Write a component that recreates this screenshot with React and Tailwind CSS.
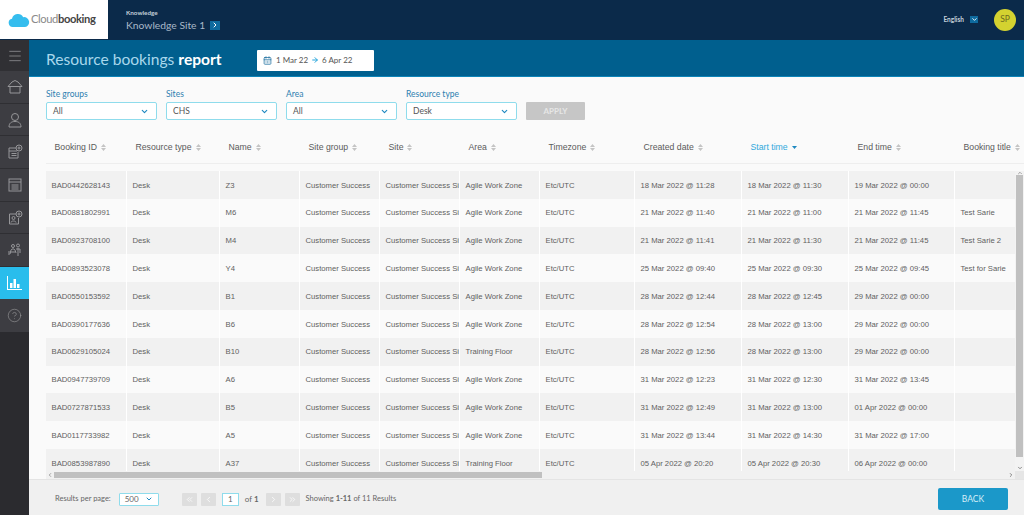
import React from 'react';
import { ChevronDown, ChevronRight, ChevronLeft, ChevronsLeft, ChevronsRight, CalendarDays, ArrowRight, Menu, CircleHelp, ChevronUp } from 'lucide-react';

const widths = ['w-[81px]', 'w-[93px]', 'w-[80px]', 'w-[80px]', 'w-[80px]', 'w-[80px]', 'w-[95px]', 'w-[107px]', 'w-[107px]', 'w-[106px]', 'w-[90px]'];

const headers = ['Booking ID', 'Resource type', 'Name', 'Site group', 'Site', 'Area', 'Timezone', 'Created date', 'Start time', 'End time', 'Booking title'];

const rows = [
  ['BAD0442628143', 'Z3', 'Agile Work Zone', '18 Mar 2022 @ 11:28', '18 Mar 2022 @ 11:30', '19 Mar 2022 @ 00:00', ''],
  ['BAD0881802991', 'M6', 'Agile Work Zone', '21 Mar 2022 @ 11:40', '21 Mar 2022 @ 11:00', '21 Mar 2022 @ 11:45', 'Test Sarie'],
  ['BAD0923708100', 'M4', 'Agile Work Zone', '21 Mar 2022 @ 11:41', '21 Mar 2022 @ 11:30', '21 Mar 2022 @ 11:45', 'Test Sarie 2'],
  ['BAD0893523078', 'Y4', 'Agile Work Zone', '25 Mar 2022 @ 09:40', '25 Mar 2022 @ 09:30', '25 Mar 2022 @ 09:45', 'Test for Sarie'],
  ['BAD0550153592', 'B1', 'Agile Work Zone', '28 Mar 2022 @ 12:44', '28 Mar 2022 @ 12:45', '29 Mar 2022 @ 00:00', ''],
  ['BAD0390177636', 'B6', 'Agile Work Zone', '28 Mar 2022 @ 12:54', '28 Mar 2022 @ 13:00', '29 Mar 2022 @ 00:00', ''],
  ['BAD0629105024', 'B10', 'Training Floor', '28 Mar 2022 @ 12:56', '28 Mar 2022 @ 13:00', '29 Mar 2022 @ 00:00', ''],
  ['BAD0947739709', 'A6', 'Agile Work Zone', '31 Mar 2022 @ 12:23', '31 Mar 2022 @ 12:30', '31 Mar 2022 @ 13:45', ''],
  ['BAD0727871533', 'B5', 'Agile Work Zone', '31 Mar 2022 @ 12:49', '31 Mar 2022 @ 13:00', '01 Apr 2022 @ 00:00', ''],
  ['BAD0117733982', 'A5', 'Agile Work Zone', '31 Mar 2022 @ 13:44', '31 Mar 2022 @ 14:30', '31 Mar 2022 @ 17:00', ''],
  ['BAD0853987890', 'A37', 'Training Floor', '05 Apr 2022 @ 20:20', '05 Apr 2022 @ 20:30', '06 Apr 2022 @ 00:00', ''],
];

const NavIcon = ({ children }) => (
  <svg width="16" height="16" viewBox="0 0 16 16" fill="none" stroke="currentColor" strokeWidth="1">{children}</svg>
);

const navItems = [
  <NavIcon key="home"><path d="M1 7.500 5 3l3-1.500L11 3l4 4.500M3 7.500V14h10V7.500M1 7.500h14" /></NavIcon>,
  <NavIcon key="user"><circle cx="8" cy="5" r="3.500" /><path d="M2 15c0-4 2.500-5.500 6-5.500s6 1.500 6 5.500z" /></NavIcon>,
  <NavIcon key="cal-add"><path d="M9 4H2v10h9V8M2 7h8M4.500 9.500h5M4.500 11.500h5" /><circle cx="12" cy="4" r="3" /><path d="M12 2.500v3M10.500 4h3" /></NavIcon>,
  <NavIcon key="cal"><rect x="2" y="2" width="12" height="12" /><path d="M2 5h12M4.500 8h7M4.500 10h7M4.500 12h7" /></NavIcon>,
  <NavIcon key="person-add"><path d="M9 4H2.500v10h9V8" /><circle cx="6.500" cy="8" r="1.500" /><path d="M4 12.500c0-2 5-2 5 0" /><circle cx="12" cy="4" r="3" /><path d="M12 2.500v3M10.500 4h3" /></NavIcon>,
  <NavIcon key="people"><circle cx="6" cy="4" r="1.500" /><circle cx="11" cy="3.500" r="1.500" /><path d="M1 12h2l1-4c1-1.500 3-1.500 4 0l1 3M11 6v8M9 7h4v4M1 10h7" /></NavIcon>,
];

const Select = ({ value }) => (
  <div className="w-[111px] h-[18px] bg-white border border-[#8fdcec] rounded-[2px] flex items-center justify-between pl-[6px] pr-[7px] text-[8.500px] text-[#555]">
    <span>{value}</span>
    <ChevronDown size={9} strokeWidth={3} className="text-[#1e88c0]" />
  </div>
);

const Filter = ({ label, value }) => (
  <div className="flex flex-col gap-[2px]">
    <span className="text-[8.500px] leading-[11px] text-[#2e7fb0]">{label}</span>
    <Select value={value} />
  </div>
);

const SortIcon = () => (
  <svg width="5" height="7" viewBox="0 0 5 7" fill="#c4c4c4"><path d="M2.500 0 5 3H0zM2.500 7 0 4h5z" /></svg>
);

const PageBtn = ({ children }) => (
  <div className="w-[15px] h-[13px] bg-[#dedede] rounded-[1px] flex items-center justify-center text-white">{children}</div>
);

export default function App() {
  return (
    <div className="w-[1024px] h-[515px] overflow-hidden flex flex-col bg-[#fafafa] font-['Lato',sans-serif]">
      {/* top bar */}
      <header className="h-[40px] shrink-0 bg-[#0b2a4a] flex items-start">
        <div className="w-[108px] h-[39px] bg-white flex items-center pl-[8px]">
          <svg width="22" height="14" viewBox="0 0 23 15" fill="#35bdee"><path d="M5 15a4.500 4.500 0 0 1-1-8.900A6.500 6.500 0 0 1 16 4.500 5.300 5.300 0 0 1 18 15z" /></svg>
          <span className="text-[11.200px] tracking-[-0.4px] text-[#8a8a8a] ml-[1px]">Cloud<span className="text-[#444] font-bold">booking</span></span>
        </div>
        <div className="pl-[18px] pt-[9px] flex flex-col">
          <span className="text-[6.300px] leading-[8px] font-bold text-[#c5d0da]">Knowledge</span>
          <div className="flex items-center gap-[5px]">
            <span className="text-[10.300px] leading-[16px] text-[#a9b8c8]">Knowledge Site 1</span>
            <span className="w-[10px] h-[9px] bg-[#0e6a9e] flex items-center justify-center text-white">
              <ChevronRight size={8} strokeWidth={3} />
            </span>
          </div>
        </div>
        <div className="ml-auto flex items-center h-[39px] pr-[8px]">
          <span className="text-[6.500px] font-bold text-[#c5d0da]">English</span>
          <span className="w-[8px] h-[7px] bg-[#0e6a9e] flex items-center justify-center text-white ml-[6px] mr-[16px]">
            <ChevronDown size={7} strokeWidth={3} />
          </span>
          <span className="w-[22px] h-[22px] rounded-full bg-[#d4d230] flex items-center justify-center text-[8.500px] text-[#6b6a20]">SP</span>
        </div>
      </header>

      <div className="flex flex-1 min-h-0">
        {/* sidebar */}
        <nav className="w-[29px] shrink-0 bg-[#2b2b2f] flex flex-col text-[#969699]">
          <div className="h-[31px] flex items-center justify-center bg-[#303034]"><Menu size={16} strokeWidth={1} className="text-[#a5a5a8]" /></div>
          {navItems.map((icon) => (
            <div key={icon.key} className="h-[32.700px] flex items-center justify-center bg-[#3d3d42] border-b border-[#2f2f33]">{icon}</div>
          ))}
          <div className="h-[32px] flex items-center justify-center bg-[#29bdec] text-white">
            <svg width="15" height="14" viewBox="0 0 15 14" fill="currentColor"><path d="M0 0h1v13h14v1H0zM3 7h2.500v5H3zM6.500 3H9v9H6.500zM10 8h2.500v4H10z" /></svg>
          </div>
          <div className="h-[33px] flex items-center justify-center bg-[#3d3d42]"><CircleHelp size={15} strokeWidth={1} /></div>
        </nav>

        <main className="flex-1 min-w-0 flex flex-col">
          {/* title band */}
          <div className="h-[37px] shrink-0 bg-[#005f8e] border-b border-[#0c84b8] flex items-center pl-[17px] pt-[2px]">
            <h1 className="w-[211px] text-[15.600px] leading-[20px] text-[#a8d8ec] whitespace-nowrap">Resource bookings <span className="font-bold text-white">report</span></h1>
            <div className="w-[117px] h-[21px] mt-[2px] bg-white rounded-[1px] flex items-center pl-[6px] text-[8px] text-[#555]">
              <CalendarDays size={9} className="text-[#1d6f9f] mr-[4px]" />
              1 Mar 22
              <ArrowRight size={8} strokeWidth={3} className="text-[#29a6dc] mx-[3px]" />
              6 Apr 22
            </div>
          </div>

          {/* filters */}
          <div className="flex items-end gap-[9px] pl-[17px] pt-[12px] shrink-0">
            <Filter label="Site groups" value="All" />
            <Filter label="Sites" value="CHS" />
            <Filter label="Area" value="All" />
            <Filter label="Resource type" value="Desk" />
            <div className="w-[59px] h-[18px] bg-[#c6c6c6] rounded-[1px] flex items-center justify-center text-[8px] font-bold text-[#e6e6e6]">APPLY</div>
          </div>

          {/* table */}
          <div className="flex-1 min-h-0 flex flex-col pl-[17px] pt-[13px] font-['Liberation_Sans',sans-serif] overflow-hidden">
            <div className="h-[31px] shrink-0 flex items-center border-b border-[#eeeeee] whitespace-nowrap">
              {headers.map((h, i) => (
                <div key={h} className={`${widths[i]} shrink-0 pl-[8.500px] flex items-center gap-[4px] text-[8.700px] ${h === 'Start time' ? 'text-[#2fa9dc]' : 'text-[#5a5a5a]'}`}>
                  {h}
                  {h === 'Start time' ? (
                    <svg width="5" height="3" viewBox="0 0 5 3" fill="#1e88c0"><path d="M0 0h5L2.500 3z" /></svg>
                  ) : (
                    <SortIcon />
                  )}
                </div>
              ))}
            </div>
            <div className="flex-1 min-h-0 flex mt-[7px]">
              <div className="flex-1 min-w-0 overflow-hidden">
                {rows.map((r, i) => {
                  const cells = [r[0], 'Desk', r[1], 'Customer Success', 'Customer Success Site', r[2], 'Etc/UTC', r[3], r[4], r[5], r[6]];
                  return (
                    <div key={r[0]} className="h-[27.800px] flex">
                      {cells.map((c, j) => (
                        <div key={j} className={`${widths[j]} shrink-0 border-r border-white pl-[5.500px] pt-[1px] flex items-center text-[7.700px] text-[#5f5f5f] whitespace-nowrap overflow-hidden ${i % 2 === 0 ? 'bg-[#f1f1f1]' : 'bg-[#fafafa]'}`}>
                          {c}
                        </div>
                      ))}
                    </div>
                  );
                })}
              </div>
              <div className="w-[9px] shrink-0 bg-[#f3f3f3] flex flex-col items-center">
                <div className="h-[4px] flex items-center"><ChevronUp size={6} strokeWidth={3} className="text-[#888]" /></div>
                <div className="w-[7px] h-[282px] bg-[#c0c0c0]" />
                <div className="mt-auto h-[6px] flex items-center"><ChevronDown size={6} strokeWidth={3} className="text-[#666]" /></div>
              </div>
            </div>
            <div className="h-[8px] shrink-0 flex items-center bg-[#f1f1f1]">
              <ChevronLeft size={6} strokeWidth={3} className="text-[#888] ml-[1px] mr-[1px]" />
              <div className="w-[488px] h-[6px] bg-[#c0c0c0]" />
              <ChevronRight size={6} strokeWidth={3} className="text-[#666] ml-auto mr-[1px]" />
              <div className="w-[9px] h-full bg-[#e6e6e6]" />
            </div>
          </div>

          {/* footer */}
          <footer className="h-[36px] shrink-0 bg-[#f0f0f0] border-t border-[#e4e4e4] flex items-center pl-[26px] pr-[16px] pt-[3px] text-[7.500px] text-[#666]">
            <span className="mr-[8px]">Results per page:</span>
            <div className="w-[40px] h-[13px] bg-white border border-[#8fdcec] rounded-[1px] flex items-center justify-between px-[5px] text-[8px] mr-[23px]">
              500 <ChevronDown size={8} strokeWidth={3} className="text-[#1e88c0]" />
            </div>
            <div className="flex items-center gap-[4px] mr-[6px]">
              <PageBtn><ChevronsLeft size={9} /></PageBtn>
              <PageBtn><ChevronLeft size={9} /></PageBtn>
              <div className="w-[17px] h-[13px] bg-white border border-[#8fdcec] flex items-center justify-center text-[8px] ml-[2px]">1</div>
            </div>
            <span className="text-[8px] mr-[7px]">of <b>1</b></span>
            <div className="flex items-center gap-[4px] mr-[6px]">
              <PageBtn><ChevronRight size={9} /></PageBtn>
              <PageBtn><ChevronsRight size={9} /></PageBtn>
            </div>
            <span>Showing <b>1-11</b> of 11 Results</span>
            <div className="ml-auto w-[70px] h-[22px] bg-[#1b98c9] rounded-[2px] flex items-center justify-center text-[8.500px] text-[#d5eef8]">BACK</div>
          </footer>
        </main>
      </div>
    </div>
  );
}
